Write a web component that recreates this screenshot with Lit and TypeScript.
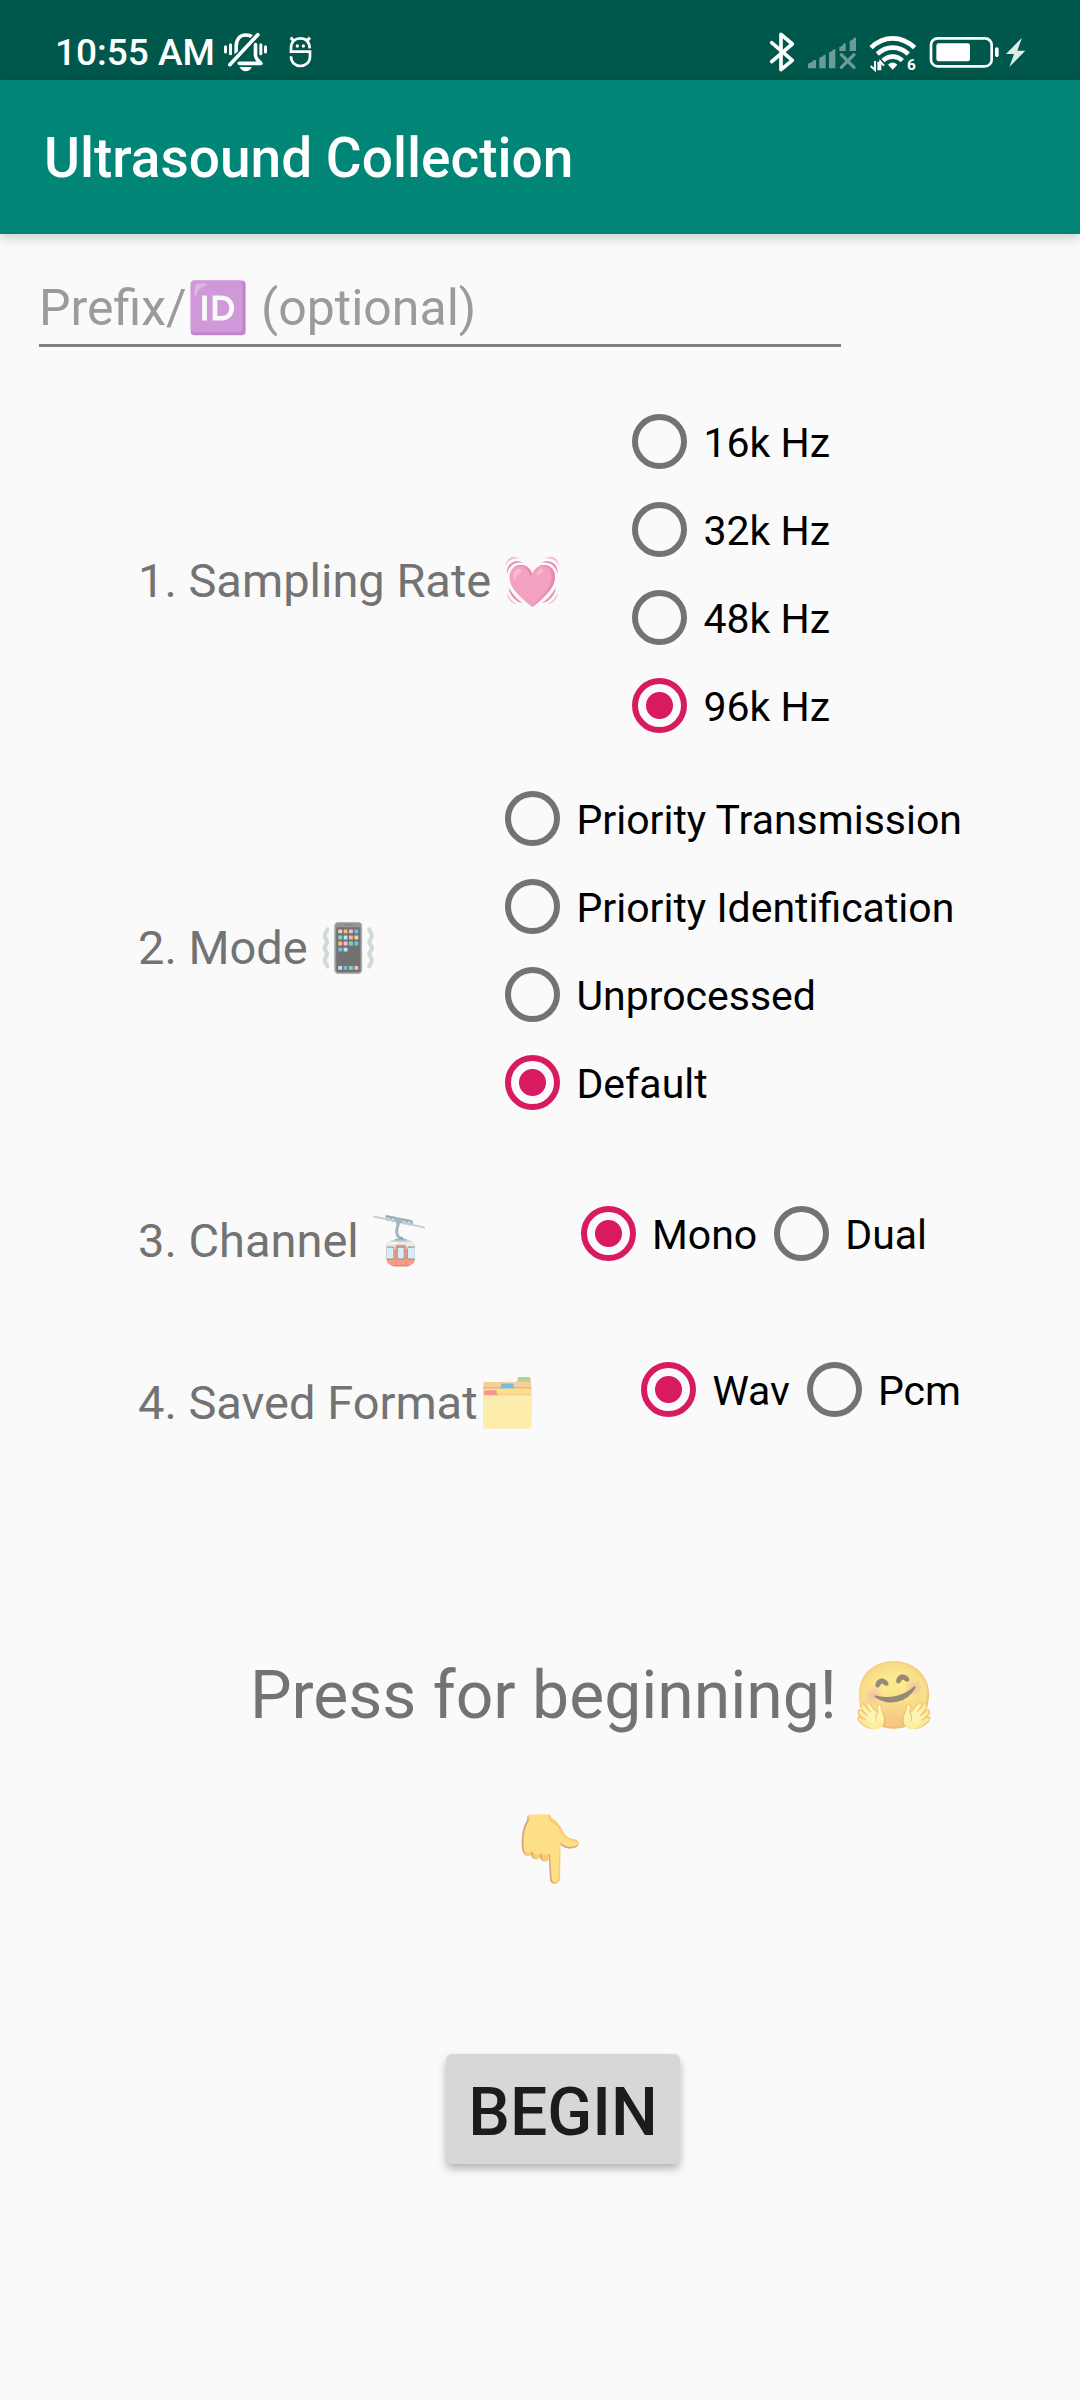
import { LitElement, html, css } from "lit";
import { customElement, state } from "lit/decorators.js";

interface Group {
  id: string;
  label: string;
  emoji: string;
  options: string[];
  inline: boolean;
}

const GROUPS: Group[] = [
  { id: "rate", label: "1. Sampling Rate ", emoji: "💓", options: ["16k Hz", "32k Hz", "48k Hz", "96k Hz"], inline: false },
  { id: "mode", label: "2. Mode ", emoji: "📳", options: ["Priority Transmission", "Priority Identification", "Unprocessed", "Default"], inline: false },
  { id: "channel", label: "3. Channel ", emoji: "🚡", options: ["Mono", "Dual"], inline: true },
  { id: "format", label: "4. Saved Format", emoji: "🗂️", options: ["Wav", "Pcm"], inline: true },
];

@customElement("status-bar")
export class StatusBar extends LitElement {
  static styles = css`
    :host { display: flex; justify-content: space-between; padding: 32px 54px 8px 55px; background: #00574b; color: #fff; }
    .side { display: flex; align-items: center; height: 40px; }
    .right { gap: 13px; }
    .time { font-size: 37px; font-weight: 500; line-height: 40px; padding-top: 2px; margin-right: 8px; white-space: nowrap; }
    .mute { margin-right: 20px; }
    svg { display: block; height: 40px; flex: none; overflow: visible; }
  `;
  render() {
    return html`
      <div class="side">
        <span class="time">10:55 AM</span>
        <svg class="mute" viewBox="645 98 132 120" width="45" fill="none" stroke="#fff" stroke-linecap="round" stroke-linejoin="round">
          <path d="M683 163V142C683 120 694 107 712 107C720 107 727 109 732 113" stroke-width="11" stroke-linecap="butt" />
          <path d="M741 136V168C741 178 750 184 757 192H692" stroke-width="11" />
          <path d="M664 196L748 106" stroke="#00574b" stroke-width="20" stroke-linecap="butt" />
          <path d="M664 196L748 106" stroke-width="11" />
          <path d="M651 142V158M666 136V163M757 136V163M771 142V158" stroke-width="9" />
          <path d="M693 203H730C726 211 720 216 712 216C704 216 697 211 693 203Z" fill="#fff" stroke="none" />
        </svg>
        <svg viewBox="834 96 72 120" width="24" fill="none" stroke="#fff" stroke-width="8">
          <path d="M899 145C898 123 885 115 871 115C857 115 843 123 843 145V155H900V170C900 188 886 198 871 198C856 198 843 188 843 169" />
          <path d="M842 113L853 124M900 113L889 124" stroke-width="9" />
          <circle cx="862" cy="138" r="5" fill="#fff" stroke="none" />
          <circle cx="880" cy="138" r="5" fill="#fff" stroke="none" />
        </svg>
      </div>
      <div class="side right">
        <svg viewBox="90 95 75 120" width="25" fill="none" stroke="#fff" stroke-width="11" stroke-linecap="round" stroke-linejoin="round">
          <path d="M95 127L157 180L123 208V102L157 131L95 184" />
        </svg>
        <svg viewBox="204 95 144 120" width="48" fill="#fff" opacity="0.42">
          <path d="M204 204V190Q216 188 221 179H228V204ZM238 204V172Q248 170 252 163H257V204ZM267 204V156Q277 154 281 147H286V204ZM298 152V140Q309 137 312 129H317V152ZM329 152V122Q338 120 342 112H348V152Z" />
          <path d="M304 163L342 201M342 163L304 201" stroke="#fff" stroke-width="10" stroke-linecap="round" />
        </svg>
        <svg viewBox="384 95 144 120" width="48" fill="none" stroke="#fff" stroke-width="14">
          <path d="M390 142Q419 114 455 114T521 142M409 161Q429 142 455 142T502 161M426 181Q438 169 455 169T484 181" />
          <path d="M441 193Q455 180 469 193L455 208Z" fill="#fff" stroke="none" />
          <path d="M402 182V209L389 197M418 210V184L429 196M412 184V210" stroke-width="6" />
          <text x="498" y="209" font-family="Roboto, sans-serif" font-size="46" font-weight="700" fill="#fff" stroke="none">6</text>
        </svg>
        <svg viewBox="570 95 288 120" width="96" fill="#fff">
          <rect x="573" y="114" width="182" height="84" rx="20" fill="none" stroke="#fff" stroke-width="8" />
          <rect x="589" y="129" width="101" height="54" rx="7" />
          <rect x="765" y="141" width="11" height="29" rx="5" />
          <path d="M846 112L798 161H822L808 200L856 151H832Z" opacity="0.88" />
        </svg>
      </div>
    `;
  }
}

@customElement("app-root")
export class AppRoot extends LitElement {
  static styles = css`
    :host { display: flex; flex-direction: column; min-height: 100vh; background: #fafafa; color: #000; font-family: Roboto, sans-serif; }
    .bar { padding: 0 44px; background: #008577; box-shadow: 0 3px 12px rgba(0, 0, 0, 0.2); }
    .title { margin: 0; color: #fff; font-size: 55px; font-weight: 500; line-height: 152px; padding: 2px 0 0; }
    .field { display: grid; margin: 30px 239px 0 39px; }
    .prefix, .hint { grid-area: 1 / 1; font-size: 50px; line-height: 58px; }
    .prefix { box-sizing: border-box; width: 100%; height: 83px; padding: 0; border: 0; border-bottom: 3px solid #808080; background: none; font-family: inherit; color: #212121; outline: none; }
    .hint { align-self: end; padding-bottom: 10px; color: #9b9b9b; pointer-events: none; white-space: nowrap; }
    .prefix:not(:placeholder-shown) + .hint { visibility: hidden; }
    .form { display: flex; flex-direction: column; padding-top: 50px; }
    .group { display: flex; align-items: center; justify-content: space-between; margin: 0; padding: 0 119px 0 138px; border: 0; }
    .group.rate { padding-right: 250px; padding-bottom: 25px; }
    .group.mode { padding-right: 118px; padding-bottom: 63px; }
    .group.channel { padding-right: 153px; padding-bottom: 68px; }
    .label { font-size: 47px; line-height: 55px; color: #737373; white-space: nowrap; }
    .rate .label, .channel .label { padding-top: 15px; }
    .mode .label { padding-bottom: 6px; }
    .format .label { padding-top: 27px; }
    .emoji { opacity: 0.54; }
    .options { display: flex; flex-direction: column; }
    .options.inline { flex-direction: row; }
    .option { display: flex; align-items: center; height: 88px; font-size: 41px; line-height: 48px; white-space: nowrap; }
    .text { padding-top: 3px; }
    .radio { appearance: none; box-sizing: border-box; width: 55px; height: 55px; margin: 0 16px 0 17px; border: 6px solid #737373; border-radius: 50%; }
    .radio:checked { border-color: #d81b60; background: radial-gradient(circle, #d81b60 13px, transparent 14px); }
    .start { display: flex; flex-direction: column; align-items: center; padding-top: 224px; }
    .prompt { margin: 0; padding-left: 105px; font-size: 66px; line-height: 78px; color: #737373; white-space: nowrap; }
    .hand { margin: 75px 0 0; padding-left: 15px; font-size: 66px; line-height: 78px; }
    .action { padding: 166px 0 0 46px; }
    .begin { display: block; width: 234px; height: 110px; padding: 8px 0 0; border: 0; border-radius: 6px; background: #d6d8d7; box-shadow: 0 5px 8px rgba(0, 0, 0, 0.28); color: #1c1c1c; font-family: inherit; font-size: 66px; font-weight: 500; line-height: 78px; }
  `;

  @state() private chosen: Record<string, string> = { rate: "96k Hz", mode: "Default", channel: "Mono", format: "Wav" };

  private choose(id: string, value: string) {
    this.chosen = { ...this.chosen, [id]: value };
  }

  private renderGroup(g: Group) {
    return html`
      <div class="group ${g.id}" role="radiogroup" aria-labelledby="${g.id}-label">
        <span class="label" id="${g.id}-label">${g.label}<span class="emoji">${g.emoji}</span></span>
        <div class="options ${g.inline ? "inline" : ""}">
          ${g.options.map((o) => html`
            <label class="option">
              <input class="radio" type="radio" name=${g.id} .checked=${this.chosen[g.id] === o} @change=${() => this.choose(g.id, o)} />
              <span class="text">${o}</span>
            </label>
          `)}
        </div>
      </div>
    `;
  }

  render() {
    return html`
      <status-bar></status-bar>
      <header class="bar"><h1 class="title">Ultrasound Collection</h1></header>
      <main>
        <div class="field">
          <input class="prefix" id="prefix" type="text" placeholder=" " />
          <label class="hint" for="prefix">Prefix/<span class="emoji">🆔</span> (optional)</label>
        </div>
        <div class="form">${GROUPS.map((g) => this.renderGroup(g))}</div>
        <div class="start">
          <p class="prompt">Press for beginning! <span class="emoji">🤗</span></p>
          <p class="hand"><span class="emoji">👇</span></p>
          <div class="action"><button class="begin" type="button">BEGIN</button></div>
        </div>
      </main>
    `;
  }
}
